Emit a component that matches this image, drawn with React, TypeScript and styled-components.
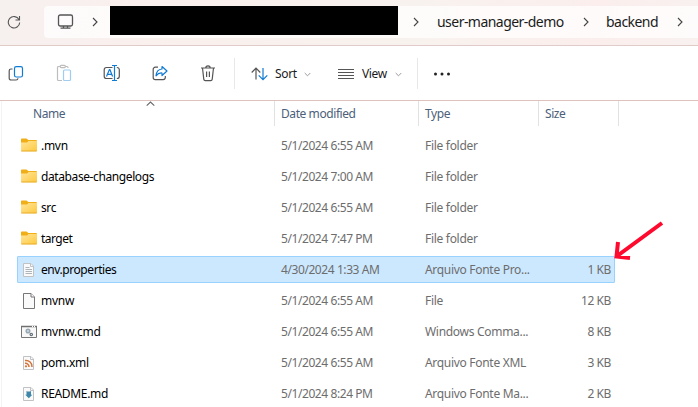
import React from "react";
import styled, { createGlobalStyle } from "styled-components";

const Global = createGlobalStyle`
  * { box-sizing: border-box; }
  html, body { margin: 0; background: #fff; }
  body { overflow: hidden; }
  svg { display: block; flex: none; }
`;

const Window = styled.main`
  width: 698px;
  height: 407px;
  overflow: hidden;
  display: flex;
  flex-direction: column;
  background: #fff;
  font-family: "Noto Sans", "Open Sans", sans-serif;
  font-size: 12px;
  color: #000;
`;

const AddressRow = styled.header`
  height: 46px;
  flex: none;
  display: flex;
  padding-top: 6px;
  border-bottom: 1px solid #e0cbc8;
  background: linear-gradient(100deg, #f6f0ef 0%, #faf0ee 22%, #f8f1ee 45%, #f8f2ee 60%, #fbeeed 85%, #f8f1ef 100%);
`;

const Refresh = styled.div`
  width: 44px;
  padding: 9px 0 0 7px;
`;

const AddressBar = styled.nav`
  flex: 1;
  height: 32px;
  display: flex;
  align-items: center;
  border-radius: 4px 0 0 4px;
  background: rgba(255, 255, 255, 0.72);
`;

const Monitor = styled.div`
  width: 48px;
  padding-left: 13px;
`;

const Redaction = styled.div`
  width: 288px;
  height: 29px;
  align-self: flex-start;
  background: #000;
`;

const Arrow = styled.div<{ $w: number; $pad?: number }>`
  width: ${(p) => p.$w}px;
  padding-left: ${(p) => p.$pad ?? 0}px;
  flex: none;
`;

const Crumb = styled.span<{ $w: number }>`
  width: ${(p) => p.$w}px;
  flex: none;
  font-size: 14px;
  line-height: 20px;
  letter-spacing: -0.54px;
  white-space: nowrap;
  color: #1b1b1b;
`;

const Toolbar = styled.div`
  height: 55px;
  flex: none;
  display: flex;
  align-items: center;
  border-bottom: 1px solid #dcc3be;
`;

const Tools = styled.div`
  width: 234px;
  display: flex;
  gap: 24px;
  padding-left: 4px;
`;

const ToolButton = styled.button`
  width: 24px;
  height: 24px;
  padding: 0;
  border: 0;
  background: none;
  display: grid;
  place-items: center;
`;

const Separator = styled.div`
  width: 1px;
  height: 31px;
  background: #e8e8e8;
`;

const MenuButton = styled.button<{ $w: number; $gap: number }>`
  width: ${(p) => p.$w}px;
  padding: 2px 0 0 16px;
  border: 0;
  background: none;
  display: flex;
  align-items: center;
  gap: ${(p) => p.$gap}px;
  font: inherit;
  line-height: 16px;
  letter-spacing: -0.35px;
  color: #1b1b1b;
`;

const More = styled.div`
  padding: 2px 0 0 15px;
`;

const List = styled.section`
  flex: 1;
  margin-left: 1px;
  border-left: 1px solid #f3f3f3;
`;

const HeaderRow = styled.div`
  position: relative;
  display: grid;
  grid-template-columns: 273px 144px 120px 80px;
  height: 31px;
`;

const HeaderCell = styled.div<{ $pad: number }>`
  height: 25px;
  padding-left: ${(p) => p.$pad}px;
  border-right: 1px solid #e2e2e2;
  line-height: 25px;
  letter-spacing: -0.42px;
  color: #4c607a;
`;

const SortMark = styled.div`
  position: absolute;
  left: 144px;
  top: 0;
`;

const Row = styled.div<{ $selected?: boolean }>`
  width: 598px;
  height: 27px;
  margin: 0 0 4px 15px;
  display: grid;
  grid-template-columns: 20px 240px 144px 120px 66px;
  padding-left: 3px;
  align-items: center;
  line-height: 25px;
  border: 1px solid ${(p) => (p.$selected ? "#99d1ff" : "transparent")};
  border-radius: 1px;
  background: ${(p) => (p.$selected ? "#cce8ff" : "transparent")};
`;

const Cell = styled.span<{ $ls: number; $name?: boolean; $right?: boolean }>`
  white-space: nowrap;
  letter-spacing: ${(p) => p.$ls}px;
  color: ${(p) => (p.$name ? "#000" : "#6d6d6d")};
  text-align: ${(p) => (p.$right ? "right" : "left")};
`;

const Pointer = styled.div`
  position: absolute;
  left: 612px;
  top: 220px;
`;

const Chevron = () => (
  <svg width="7" height="10" viewBox="0 0 7 10" fill="none" stroke="#444" strokeWidth="1.1">
    <path d="M1 1l4 4-4 4" />
  </svg>
);

const Down = () => (
  <svg width="7" height="5" viewBox="0 0 7 5" fill="none" stroke="#999" strokeWidth="1">
    <path d="M.7 1l2.8 2.8L6.3 1" />
  </svg>
);

const RefreshIcon = () => (
  <svg width="14" height="14" viewBox="0 0 14 14" fill="none" stroke="#555" strokeWidth="1.1">
    <path d="M12 4.5A5.700 5.700 0 1 0 12.700 7.500M12.500 1v4h-4" />
  </svg>
);

const MonitorIcon = () => (
  <svg width="17" height="16" viewBox="0 0 17 16" fill="none" stroke="#555" strokeWidth="1.3">
    <rect x="1.500" y="1" width="14" height="11" rx="1.700" />
    <path d="M6.500 12v2M10.500 12v2M3.500 14.100h10" />
  </svg>
);

const CopyIcon = () => (
  <svg width="16" height="16" viewBox="0 0 16 16" fill="none" strokeWidth="1.2">
    <path d="M4.500 4H3a1.800 1.800 0 0 0-1.800 1.800v7.400A1.800 1.800 0 0 0 3 15h5a2 2 0 0 0 2-1.800" stroke="#555" />
    <rect x="6.500" y="1.700" width="8" height="10.300" rx="1.800" stroke="#0f7bd4" />
  </svg>
);

const PasteIcon = () => (
  <svg width="16" height="18" viewBox="0 0 16 18" fill="none" strokeWidth="1.2">
    <path d="M6 16.500H2.500a1 1 0 0 1-1-1V3.500a1 1 0 0 1 1-1H4M9.500 2.500H11a1 1 0 0 1 1 1V4" stroke="#bdbdbd" />
    <rect x="4.200" y="1.300" width="5.200" height="2.300" rx="1" stroke="#bdbdbd" />
    <rect x="7.500" y="6" width="7" height="10.500" rx="1" stroke="#9fcdf2" />
  </svg>
);

const RenameIcon = () => (
  <svg width="18" height="18" viewBox="0 0 18 18" fill="none" strokeWidth="1.2">
    <path d="M9.500 3.500H3.500A2.300 2.300 0 0 0 1.200 5.800v6.400A2.300 2.300 0 0 0 3.500 14.500h6M13.800 3.500h.2a2.300 2.300 0 0 1 2.300 2.300v6.400A2.300 2.300 0 0 1 14 14.500h-.2" stroke="#555" />
    <path d="M3.500 12.500L6.400 5.500h.5L9.600 12.500M4.500 10.300h4.200M11.500 1.500v15M9 1.500h5M9 16.500h5" stroke="#0f7bd4" />
  </svg>
);

const ShareIcon = () => (
  <svg width="16" height="16" viewBox="0 0 16 16" fill="none" strokeWidth="1.2" strokeLinejoin="round">
    <path d="M6 2.200H3.300A2.100 2.100 0 0 0 1.200 4.300v8.200a2.100 2.100 0 0 0 2.100 2.100h7.900a2.100 2.100 0 0 0 2.100-2.100V11" stroke="#555" />
    <path d="M10 1.500L15 6l-5 4.500V8C7.500 7.800 5.700 8.500 4 10.800 4.300 7 6.500 4.300 10 4z" stroke="#0f7bd4" />
  </svg>
);

const TrashIcon = () => (
  <svg width="16" height="17" viewBox="0 0 16 17" fill="none" stroke="#555" strokeWidth="1.2">
    <path d="M1 3h14M5.800 3a2.200 2.200 0 0 1 4.400 0M2.500 3l1.300 11.400A1.500 1.500 0 0 0 5.300 15.700h5.400a1.500 1.500 0 0 0 1.500-1.300L13.500 3M6.600 6.500v5.600M9.400 6.500v5.600" />
  </svg>
);

const SortIcon = () => (
  <svg width="17" height="14" viewBox="0 0 17 14" fill="none" strokeWidth="1.2">
    <path d="M5 12.500V1.500M.7 5.500L5 1.200l4.300 4.300" stroke="#555" />
    <path d="M12 1v11.500M7.700 8.300l4.300 4.300 4.300-4.300" stroke="#0f7bd4" />
  </svg>
);

const LinesIcon = () => (
  <svg width="16" height="12" viewBox="0 0 16 12" fill="#555">
    <path d="M0 1h16v1H0zM0 4h16v1H0zM0 7h16v1H0zM0 10h16v1H0z" />
  </svg>
);

const FolderIcon = () => (
  <svg width="16" height="16" viewBox="0 0 16 16">
    <defs>
      <linearGradient id="folder" x1="0" y1="0" x2="1" y2="1">
        <stop offset="0" stopColor="#ffe59a" />
        <stop offset="1" stopColor="#ffc93e" />
      </linearGradient>
    </defs>
    <path d="M0 1.200Q0 .5.800.5H5.500L7.300 2H15q1 0 1 1v3H0z" fill="#f0ae17" />
    <path d="M0 4.500h6L7.500 3H16v9.500q0 .8-.8.800H.8Q0 13.300 0 12.500z" fill="url(#folder)" />
    <path d="M.3 13h15.400" stroke="#e5a823" strokeWidth=".9" />
  </svg>
);

type Kind = "folder" | "text" | "blank" | "cmd" | "xml" | "md";

const Sheet = ({ children }: { children: React.ReactNode }) => (
  <svg width="16" height="16" viewBox="0 0 16 16">
    <path d="M2.500 1.500h7.500l2.500 2.500v10.500H2.500z" fill="#fafafa" stroke="#c0c2c4" />
    <path d="M9.500 1.500V4.500H12.500" fill="none" stroke="#c0c2c4" />
    {children}
  </svg>
);

const FileIcon = ({ kind }: { kind: Kind }) => {
  switch (kind) {
    case "folder":
      return <FolderIcon />;
    case "text":
      return (
        <Sheet>
          <path d="M4.500 5.500h4M4.500 7.500H11M4.500 9.500H11M4.500 11.500H11" stroke="#aeb5ba" />
        </Sheet>
      );
    case "blank":
      return (
        <svg width="16" height="16" viewBox="0 0 16 16" fill="#fafafa" stroke="#777">
          <path d="M2.500.5h7.500l3.500 3.500v11.500h-11z" />
          <path d="M10 .5V4h3.500" />
        </svg>
      );
    case "cmd":
      return (
        <svg width="16" height="14" viewBox="0 0 16 14">
          <path d="M.5 1.500h15v11H.5z" fill="#f8f8f8" stroke="#777" />
          <path d="M0 1.500h16" stroke="#707070" strokeWidth="1.500" />
          <path d="M11 1.500h1M13 1.500h1" stroke="#fff" />
          <circle cx="7" cy="6" r="1.800" fill="#c8d8e2" stroke="#9aa8b2" strokeWidth="1.500" />
          <circle cx="10.300" cy="9.500" r="1.200" fill="#fff" stroke="#66717a" strokeWidth="1.200" />
        </svg>
      );
    case "xml":
      return (
        <Sheet>
          <path d="M4 5.500a6 6 0 0 1 7 6.500M4 8.300a3.500 3.500 0 0 1 4 3.700" fill="none" stroke="#d67236" strokeWidth="1.500" />
          <circle cx="5" cy="11.300" r="1.100" fill="#d67236" />
        </Sheet>
      );
    case "md":
      return (
        <Sheet>
          <path d="M5.500 5l1 .6h2.500l1-.6v3.700h1.300L7.800 12.300 4.300 8.700h1.200z" fill="#3f87a8" />
        </Sheet>
      );
  }
};

interface FileEntry {
  kind: Kind;
  name: string;
  date: string;
  type: string;
  size?: string;
  selected?: boolean;
  tracking: number;
}

const files: FileEntry[] = [
  { kind: "folder", name: ".mvn", date: "5/1/2024 6:55 AM", type: "File folder", tracking: -0.3 },
  { kind: "folder", name: "database-changelogs", date: "5/1/2024 7:00 AM", type: "File folder", tracking: -0.4 },
  { kind: "folder", name: "src", date: "5/1/2024 6:55 AM", type: "File folder", tracking: -0.4 },
  { kind: "folder", name: "target", date: "5/1/2024 7:47 PM", type: "File folder", tracking: -0.52 },
  { kind: "text", name: "env.properties", date: "4/30/2024 1:33 AM", type: "Arquivo Fonte Pro...", size: "1 KB", selected: true, tracking: -0.43 },
  { kind: "blank", name: "mvnw", date: "5/1/2024 6:55 AM", type: "File", size: "12 KB", tracking: -0.25 },
  { kind: "cmd", name: "mvnw.cmd", date: "5/1/2024 6:55 AM", type: "Windows Comma...", size: "8 KB", tracking: -0.2 },
  { kind: "xml", name: "pom.xml", date: "5/1/2024 6:55 AM", type: "Arquivo Fonte XML", size: "3 KB", tracking: -0.27 },
  { kind: "md", name: "README.md", date: "5/1/2024 8:24 PM", type: "Arquivo Fonte Ma...", size: "2 KB", tracking: -0.32 },
];

export default function App() {
  return (
    <Window>
      <Global />
      <AddressRow>
        <Refresh><RefreshIcon /></Refresh>
        <AddressBar>
          <Monitor><MonitorIcon /></Monitor>
          <Arrow $w={18}><Chevron /></Arrow>
          <Redaction />
          <Arrow $w={39} $pad={15}><Chevron /></Arrow>
          <Crumb $w={146}>user-manager-demo</Crumb>
          <Arrow $w={23}><Chevron /></Arrow>
          <Crumb $w={71}>backend</Crumb>
          <Arrow $w={18}><Chevron /></Arrow>
        </AddressBar>
      </AddressRow>
      <Toolbar>
        <Tools>
          <ToolButton><CopyIcon /></ToolButton>
          <ToolButton><PasteIcon /></ToolButton>
          <ToolButton><RenameIcon /></ToolButton>
          <ToolButton><ShareIcon /></ToolButton>
          <ToolButton><TrashIcon /></ToolButton>
        </Tools>
        <Separator />
        <MenuButton $w={87} $gap={7}><SortIcon />Sort<Down /></MenuButton>
        <MenuButton $w={95} $gap={8}><LinesIcon />View<Down /></MenuButton>
        <Separator />
        <More>
          <svg width="18" height="4" viewBox="0 0 18 4" fill="#222">
            <circle cx="2.500" cy="2" r="1.500" /><circle cx="9" cy="2" r="1.500" /><circle cx="15.500" cy="2" r="1.500" />
          </svg>
        </More>
      </Toolbar>
      <List>
        <HeaderRow>
          <HeaderCell $pad={31}>Name</HeaderCell>
          <HeaderCell $pad={6}>Date modified</HeaderCell>
          <HeaderCell $pad={6}>Type</HeaderCell>
          <HeaderCell $pad={6}>Size</HeaderCell>
          <SortMark>
            <svg width="9" height="6" viewBox="0 0 9 6" fill="none" stroke="#666" strokeWidth="1.1"><path d="M.7 4.700l3.800-3.700 3.800 3.700" /></svg>
          </SortMark>
        </HeaderRow>
        {files.map((f) => (
          <Row key={f.name} $selected={f.selected}>
            <FileIcon kind={f.kind} />
            <Cell $name $ls={f.tracking}>{f.name}</Cell>
            <Cell $ls={-0.42}>{f.date}</Cell>
            <Cell $ls={-0.3}>{f.type}</Cell>
            <Cell $ls={-0.42} $right>{f.size}</Cell>
          </Row>
        ))}
      </List>
      <Pointer>
        <svg width="52" height="42" viewBox="0 0 52 42" fill="none" stroke="#ff0a2f" strokeWidth="4">
          <path d="M50 3L5 36M6 22L4.500 36.500 18 38" />
        </svg>
      </Pointer>
    </Window>
  );
}
